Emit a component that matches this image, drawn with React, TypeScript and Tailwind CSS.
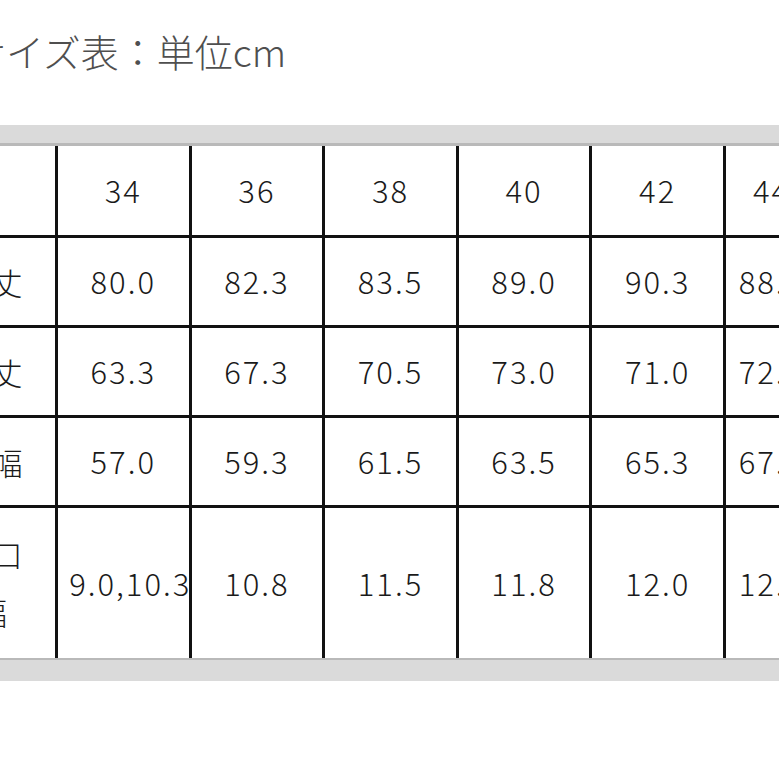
const SIZES = ["34", "36", "38", "40", "42", "44"];

const ROWS: { label: string[]; values: string[]; tall?: boolean }[] = [
  { label: ["着丈"], values: ["80.0", "82.3", "83.5", "89.0", "90.3", "88.5"] },
  { label: ["裄丈"], values: ["63.3", "67.3", "70.5", "73.0", "71.0", "72.3"] },
  { label: ["身幅"], values: ["57.0", "59.3", "61.5", "63.5", "65.3", "67.0"] },
  { label: ["袖口", "幅"], values: ["9.0,10.3", "10.8", "11.5", "11.8", "12.0", "12.3"], tall: true },
];

const font = "font-['Noto_Sans_CJK_JP','Noto_Sans',sans-serif]";

function Cell({ children, last, className = "" }: { children?: React.ReactNode; last?: boolean; className?: string }) {
  return (
    <div
      className={`flex shrink-0 items-center justify-center whitespace-nowrap border-l-[3px] border-[#111] ${
        last ? "w-[94px]" : "w-[133.6px]"
      } ${className}`}
    >
      {children}
    </div>
  );
}

export default function App() {
  return (
    <div className={`relative h-[779px] w-[779px] overflow-hidden bg-white font-light text-[#1a1a1a] ${font}`}>
      {/* title, first character cut off by the crop */}
      <div className="ml-[-32px] pt-[26px] text-[38px] leading-[50px] text-[#4f4f4f]">サイズ表：単位cm</div>

      <div className="mt-[49px]">
        <div className="h-[18px] bg-[#dadada]" />
        <div className="h-[3px] bg-[#b9b9b9]" />

        <div className="ml-[-78px] text-[31px] tracking-[2px]">
          {/* header row */}
          <div className="flex h-[89px]">
            <div className="w-[133px] shrink-0" />
            {SIZES.map((s, i) => (
              <Cell key={s} last={i === SIZES.length - 1}>
                {s}
              </Cell>
            ))}
          </div>

          {ROWS.map((row) => (
            <div key={row.label.join("")} className={`flex border-t-[3px] border-[#111] ${row.tall ? "h-[153px]" : "h-[90px]"}`}>
              <div className="flex w-[133px] shrink-0 flex-col items-center justify-center pl-[6px] text-[31px] leading-[58px] tracking-normal">
                {row.label.map((l) => (
                  <span key={l}>{l}</span>
                ))}
              </div>
              {row.values.map((v, i) => (
                <Cell key={i} last={i === row.values.length - 1} className={v.includes(",") ? "pl-[14px]" : ""}>
                  {v}
                </Cell>
              ))}
            </div>
          ))}
        </div>

        <div className="h-[2px] bg-[#b9b9b9]" />
        <div className="h-[21px] bg-[#dadada]" />
      </div>
    </div>
  );
}
